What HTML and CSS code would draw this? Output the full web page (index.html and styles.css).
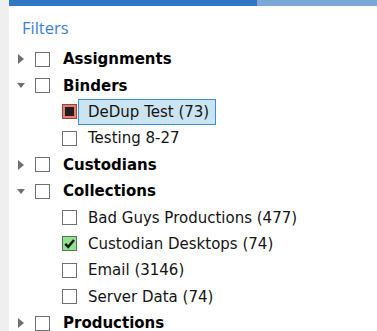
FILE: index.html
```html
<!DOCTYPE html>
<html lang="en">
<head>
    <meta charset="UTF-8">
    <title>Filters</title>
    <link rel="stylesheet" href="styles.css">
</head>
<body>
    <div class="side-strip"></div>
    <div class="panel">
        <div class="progress-bar">
            <div class="progress-done"></div>
            <div class="progress-rest"></div>
        </div>
        <div class="panel-title">Filters</div>

        <ul class="tree">
            <li class="node">
                <div class="row">
                    <span class="toggle collapsed"></span>
                    <span class="check"></span>
                    <span class="node-label">Assignments</span>
                </div>
            </li>
            <li class="node">
                <div class="row">
                    <span class="toggle expanded"></span>
                    <span class="check"></span>
                    <span class="node-label">Binders</span>
                </div>
                <ul class="children">
                    <li class="row child">
                        <span class="check partial"><span class="partial-mark"></span></span>
                        <span class="leaf-label selected">DeDup Test (73)</span>
                    </li>
                    <li class="row child">
                        <span class="check"></span>
                        <span class="leaf-label">Testing 8-27</span>
                    </li>
                </ul>
            </li>
            <li class="node">
                <div class="row">
                    <span class="toggle collapsed"></span>
                    <span class="check"></span>
                    <span class="node-label">Custodians</span>
                </div>
            </li>
            <li class="node">
                <div class="row">
                    <span class="toggle expanded"></span>
                    <span class="check"></span>
                    <span class="node-label">Collections</span>
                </div>
                <ul class="children">
                    <li class="row child">
                        <span class="check"></span>
                        <span class="leaf-label">Bad Guys Productions (477)</span>
                    </li>
                    <li class="row child">
                        <span class="check checked">
                            <svg width="13" height="13" viewBox="0 0 13 13"><path d="M2.2 6.8 L5.2 9.8 L11 3" fill="none" stroke="#1c1c1c" stroke-width="2.5"/></svg>
                        </span>
                        <span class="leaf-label">Custodian Desktops (74)</span>
                    </li>
                    <li class="row child">
                        <span class="check"></span>
                        <span class="leaf-label">Email (3146)</span>
                    </li>
                    <li class="row child">
                        <span class="check"></span>
                        <span class="leaf-label">Server Data (74)</span>
                    </li>
                </ul>
            </li>
            <li class="node">
                <div class="row">
                    <span class="toggle collapsed"></span>
                    <span class="check"></span>
                    <span class="node-label">Productions</span>
                </div>
            </li>
        </ul>
    </div>
</body>
</html>
```

FILE: styles.css
```css
* {
    margin: 0;
    padding: 0;
    box-sizing: border-box;
}

body {
    display: flex;
    min-height: 100vh;
    background: #ffffff;
    font-family: 'DejaVu Sans', Verdana, sans-serif;
    color: #111;
    overflow: hidden;
}

/* left gutter */
.side-strip {
    width: 9px;
    flex-shrink: 0;
    background: #efefef;
}

.panel {
    flex: 1;
    display: flex;
    flex-direction: column;
}

/* progress bar on top */
.progress-bar {
    display: flex;
    height: 6px;
}

.progress-done {
    width: 248px;
    background: #2f77c5;
}

.progress-rest {
    flex: 1;
    background: #7ba8d8;
}

.panel-title {
    font-family: 'Open Sans', 'Noto Sans', sans-serif;
    font-size: 16.5px;
    color: #3b7ed6;
    padding: 10px 0 0 13px;
    height: 40px;
}

/* tree */
.tree,
.children {
    list-style: none;
}

.row {
    display: flex;
    align-items: center;
    height: 26.4px;
    padding-left: 9px;
}

.toggle {
    width: 17px;
    height: 10px;
    display: flex;
    align-items: center;
}

.toggle.collapsed::before {
    content: '';
    border-left: 6px solid #6f6f6f;
    border-top: 5px solid transparent;
    border-bottom: 5px solid transparent;
}

.toggle.expanded::before {
    content: '';
    margin-left: -1px;
    border-top: 5px solid #6f6f6f;
    border-left: 4.5px solid transparent;
    border-right: 4.5px solid transparent;
}

.check {
    width: 15px;
    height: 15px;
    border: 1px solid #707070;
    background: #fff;
    flex-shrink: 0;
    display: flex;
    align-items: center;
    justify-content: center;
}

.check.partial {
    background: #f27a6c;
    border-color: #8a4a44;
}

.partial-mark {
    width: 9px;
    height: 9px;
    background: #1e1e1e;
}

.check.checked {
    background: #8fe38d;
    border-color: #5f6f5f;
}

.node-label {
    margin-left: 13px;
    font-size: 15px;
    font-weight: 700;
    color: #000;
}

.row.child {
    padding-left: 53px;
}

.leaf-label {
    margin-left: 1px;
    height: 26px;
    display: flex;
    align-items: center;
    padding: 0 6px 0 9px;
    font-size: 15px;
    color: #141414;
    border: 1px solid transparent;
}

.leaf-label.selected {
    background: #cbe4f1;
    border-color: #3d8fd8;
}
```
